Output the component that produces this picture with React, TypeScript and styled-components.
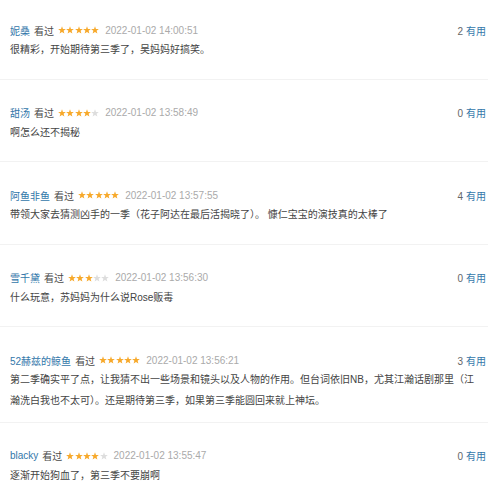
import styled, { createGlobalStyle } from 'styled-components';

const GlobalStyle = createGlobalStyle`
  body {
    margin: 0;
    background: #ffffff;
    font-family: 'Liberation Sans', Arial, 'Noto Sans CJK SC', sans-serif;
  }
`;

const List = styled.div`
  width: 488px;
`;

const Item = styled.div`
  padding: 23px 2px 0 10px;
  border-bottom: 1px solid #f2f2f2;

  &:first-child {
    padding-top: 20px;
  }
`;

const Header = styled.div`
  display: flex;
  align-items: center;
  height: 20px;
  font-size: 10px;
`;

const Name = styled.a`
  color: #3377aa;
  text-decoration: none;
  margin-right: 4px;
`;

const Seen = styled.span`
  color: #494949;
  margin-right: 4px;
`;

const Stars = styled.span`
  display: inline-flex;
  gap: 0.3px;
  margin-right: 6px;
`;

const Time = styled.span`
  color: #aaaaaa;
`;

const Votes = styled.span`
  margin-left: auto;
  color: #666666;
`;

const Useful = styled.a`
  color: #3377aa;
  text-decoration: none;
  margin-left: 3px;
`;

const Text = styled.p`
  margin: 0 6px 0 0;
  min-height: 28px;
  padding-bottom: 10.5px;
  font-size: 10px;
  line-height: 20.5px;
  color: #444444;
`;

const Star = ({ on }: { on: boolean }) => (
  <svg width="8" height="8" viewBox="0 0 10 10">
    <path
      d="M5 0.3 L6.2 3.6 L9.8 3.7 L7 5.9 L8 9.5 L5 7.4 L2 9.5 L3 5.9 L0.2 3.7 L3.8 3.6 Z"
      fill={on ? '#f7a92b' : '#dddddd'}
    />
  </svg>
);

type Comment = {
  name: string;
  rating: number;
  time: string;
  text: string;
  votes: number;
};

const comments: Comment[] = [
  {
    name: '妮桑',
    rating: 5,
    time: '2022-01-02 14:00:51',
    text: '很精彩，开始期待第三季了，吴妈妈好搞笑。',
    votes: 2,
  },
  {
    name: '甜汤',
    rating: 4,
    time: '2022-01-02 13:58:49',
    text: '啊怎么还不揭秘',
    votes: 0,
  },
  {
    name: '阿鱼非鱼',
    rating: 5,
    time: '2022-01-02 13:57:55',
    text: '带领大家去猜测凶手的一季（花子阿达在最后活揭晓了）。 慷仁宝宝的演技真的太棒了',
    votes: 4,
  },
  {
    name: '雪千黛',
    rating: 3,
    time: '2022-01-02 13:56:30',
    text: '什么玩意，苏妈妈为什么说Rose贩毒',
    votes: 0,
  },
  {
    name: '52赫兹的鲸鱼',
    rating: 5,
    time: '2022-01-02 13:56:21',
    text: '第二季确实平了点，让我猜不出一些场景和镜头以及人物的作用。但台词依旧NB，尤其江瀚话剧那里（江瀚洗白我也不太可）。还是期待第三季，如果第三季能圆回来就上神坛。',
    votes: 3,
  },
  {
    name: 'blacky',
    rating: 4,
    time: '2022-01-02 13:55:47',
    text: '逐渐开始狗血了，第三季不要崩啊',
    votes: 0,
  },
];

export default function App() {
  return (
    <>
      <GlobalStyle />
      <List>
        {comments.map((c) => (
          <Item key={c.name}>
            <Header>
              <Name href="#">{c.name}</Name>
              <Seen>看过</Seen>
              <Stars>
                {[0, 1, 2, 3, 4].map((i) => (
                  <Star key={i} on={i < c.rating} />
                ))}
              </Stars>
              <Time>{c.time}</Time>
              <Votes>
                {c.votes}
                <Useful href="#">有用</Useful>
              </Votes>
            </Header>
            <Text>{c.text}</Text>
          </Item>
        ))}
      </List>
    </>
  );
}
